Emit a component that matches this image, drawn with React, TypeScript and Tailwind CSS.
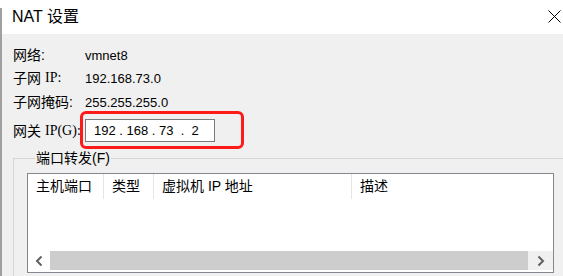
import React from 'react'

const cjk = { fontFamily: '"Liberation Sans", "Noto Sans CJK SC", sans-serif' }
const serif = { fontFamily: '"Liberation Serif", "Noto Sans CJK SC", serif' }

// Read-only info rows
const infoRows = [
  { label: '网络:', ip: false, value: 'vmnet8' },
  { label: '子网', ip: true, value: '192.168.73.0' },
  { label: '子网掩码:', ip: false, value: '255.255.255.0' },
]

const columns = [
  { name: '主机端口', width: 'w-[76px]' },
  { name: '类型', width: 'w-[50px]' },
  { name: '虚拟机 IP 地址', width: 'w-[198px]' },
  { name: '描述', width: 'flex-1' },
]

const Chevron: React.FC<{ dir: 'left' | 'right' }> = ({ dir }) => (
  <svg width="8" height="12" viewBox="0 0 8 12">
    <path
      d={dir === 'left' ? 'M6.5 1.5 L2 6 L6.5 10.5' : 'M1.5 1.5 L6 6 L1.5 10.5'}
      fill="none"
      stroke="#606060"
      strokeWidth="2"
    />
  </svg>
)

const App: React.FC = () => {
  return (
    <div className="w-[563px] h-[276px] overflow-hidden flex bg-[#f0f0f0] text-black" style={cjk}>
      {/* Window edge */}
      <div className="w-[2px] shrink-0 flex flex-col">
        <div className="h-[8px] bg-white" />
        <div className="flex-1 bg-[#a0a0a0]" />
      </div>

      <div className="w-[561px] shrink-0 overflow-hidden flex flex-col">
        {/* Title bar */}
        <div className="h-[34px] shrink-0 bg-white flex items-center justify-between pl-[10px] pr-[2px]">
          <span className="text-[16px] leading-none">NAT 设置</span>
          <svg width="13" height="13" viewBox="0 0 13 13" className="mt-[-1px]">
            <path d="M0.5 0.5 L12.5 12.5 M12.5 0.5 L0.5 12.5" stroke="#000" strokeWidth="1" />
          </svg>
        </div>

        {/* Body */}
        <div className="flex flex-col shrink-0 pl-[11px] pt-[11px]">
          {infoRows.map((row, i) => (
            <div
              key={row.value}
              className={`h-[20px] flex items-center ${i === 1 ? 'mt-[3px]' : ''} ${i === 2 ? 'mt-[4px]' : ''}`}
            >
              <span className="w-[72px] text-[14px] leading-none flex items-center">
                {row.label}
                {row.ip && (
                  <span className="text-[14px] ml-[4px]" style={serif}>
                    IP:
                  </span>
                )}
              </span>
              <span className="text-[13px] leading-none">{row.value}</span>
            </div>
          ))}

          {/* Gateway */}
          <div className="mt-[7px] h-[23px] flex items-center">
            <span className="w-[72px] text-[14px] leading-none flex items-center">
              网关
              <span className="ml-[4px]" style={serif}>
                IP(G):
              </span>
            </span>
            <div className="relative">
              <div className="w-[130px] h-[23px] bg-white border border-[#7a7a7a] flex items-center pl-[8px] text-[13px] leading-none whitespace-pre">
                {'192 . 168 . 73  .  2'}
              </div>
              <div className="absolute left-[-5px] top-[-8px] w-[164px] h-[38px] border-[3px] border-[#ff1a1a] rounded-[6px]" />
            </div>
          </div>

          {/* Port forwarding group */}
          <fieldset className="mt-[7px] w-[570px] h-[140px] border-t border-l border-[#d5d5d5] pl-[13px] pt-[6px]">
            <legend className="ml-[8px] px-[1px] text-[14px] leading-[18px]">端口转发(F)</legend>

            <div className="w-[527px] h-[100px] bg-white border border-[#828790] flex flex-col">
              {/* Header */}
              <div className="h-[25px] flex text-[14px]">
                {columns.map((col, i) => (
                  <div
                    key={col.name}
                    className={`${col.width} h-full flex items-center pl-[8px] ${i < columns.length - 1 ? 'border-r border-[#e5e5e5]' : ''}`}
                  >
                    {col.name}
                  </div>
                ))}
              </div>
              <div className="flex-1" />
              {/* Horizontal scrollbar */}
              <div className="h-[19px] mb-[2px] flex">
                <div className="w-[22px] flex items-center justify-center">
                  <Chevron dir="left" />
                </div>
                <div className="flex-1 bg-[#cdcdcd]" />
                <div className="w-[25px] flex items-center justify-center bg-[#f0f0f0]">
                  <Chevron dir="right" />
                </div>
              </div>
            </div>
          </fieldset>
        </div>
      </div>
    </div>
  )
}

export default App
